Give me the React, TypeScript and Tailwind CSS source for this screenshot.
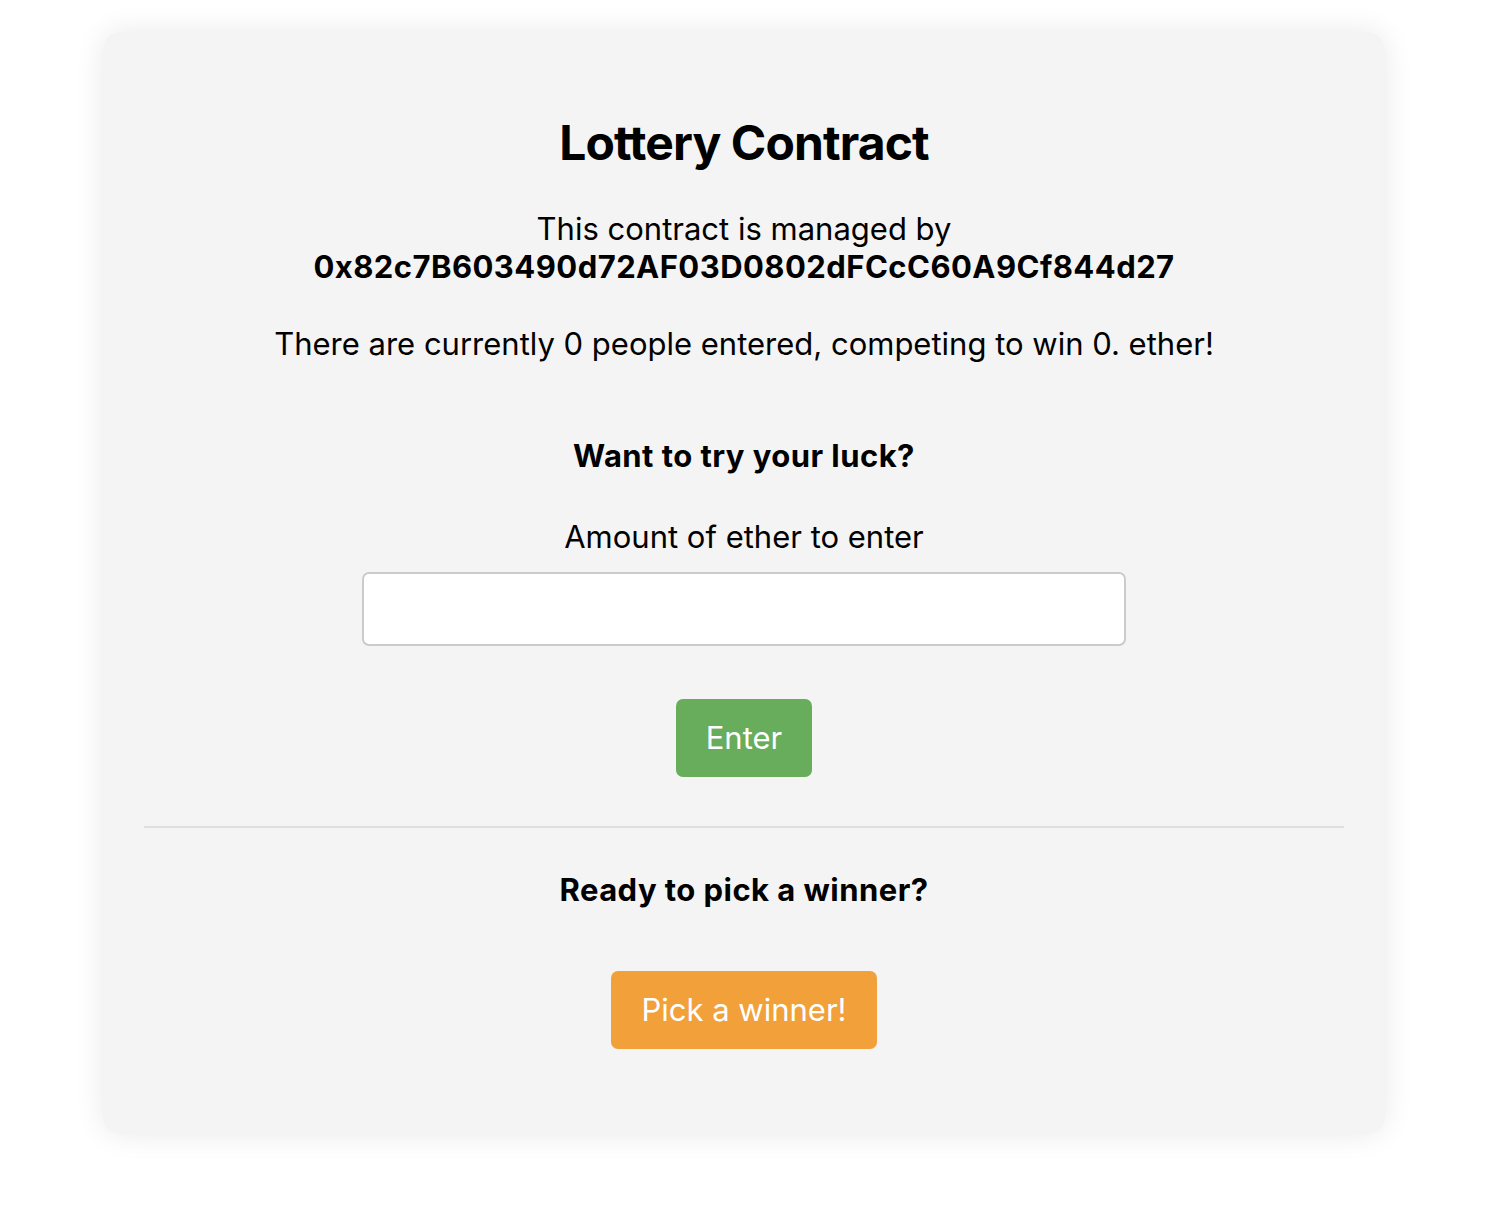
import { useState } from 'react';

export default function App() {
  const [amount, setAmount] = useState('');

  return (
    <div className="min-h-screen bg-white pt-[32px] pb-[80px] font-['Inter','Noto_Sans',sans-serif] text-black">
      <div className="ml-[103px] w-[1282px] rounded-[18px] bg-[#f4f4f4] px-[41px] pt-[82px] pb-[85px] text-center shadow-[0_0_30px_rgba(0,0,0,0.09)]">
        {/* Heading */}
        <h1 className="text-[48px] font-bold leading-[58px] tracking-[-0.9px]">Lottery Contract</h1>

        <p className="mt-[38px] text-[31px] leading-[38px]">
          This contract is managed by
          <br />
          <span className="font-bold tracking-[0.45px]">0x82c7B603490d72AF03D0802dFCcC60A9Cf844d27</span>
        </p>

        <p className="mt-[39px] text-[31px] leading-[38px]">
          There are currently 0 people entered, competing to win 0. ether!
        </p>

        {/* Enter form */}
        <form className="mt-[74px] flex flex-col items-center" onSubmit={(e) => e.preventDefault()}>
          <h4 className="text-[31px] font-bold leading-[38px] tracking-[0.45px]">Want to try your luck?</h4>
          <label className="mt-[43px] text-[31px] leading-[38px]">Amount of ether to enter</label>
          <input
            value={amount}
            onChange={(e) => setAmount(e.target.value)}
            className="mt-[16px] h-[74px] w-[764px] rounded-[7px] border-2 border-[#cbcbcb] bg-white px-4 text-[31px] outline-none"
          />
          <button className="mt-[53px] h-[78px] rounded-[7px] bg-[#67ad5b] px-[30px] text-[31px] text-white">
            Enter
          </button>
        </form>

        <hr className="mt-[49px] h-[2px] border-0 bg-[#dfdfdf]" />

        <h4 className="mt-[43px] text-[31px] font-bold leading-[38px] tracking-[0.45px]">Ready to pick a winner?</h4>
        <button className="mt-[62px] h-[78px] rounded-[7px] bg-[#f1a03a] px-[30px] text-[31px] text-white">
          Pick a winner!
        </button>
      </div>
    </div>
  );
}
